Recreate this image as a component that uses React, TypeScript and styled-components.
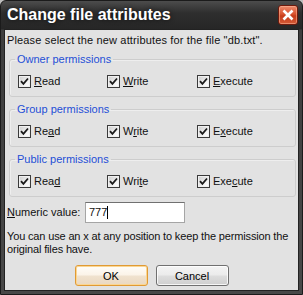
import React from 'react';
import styled, { createGlobalStyle } from 'styled-components';

const GlobalStyle = createGlobalStyle`
    html, body {
        margin: 0;
        padding: 0;
        background: #bdbdbd;
    }
    body {
        font-family: "Liberation Sans", Arial, sans-serif;
        font-size: 11px;
        color: #111;
    }
`;

const Window = styled.div`
    width: 303px;
    height: 295px;
    box-sizing: border-box;
    border: 1px solid #1b1b1b;
    border-radius: 6px 6px 0 0;
    background: linear-gradient(#4c4c4c 0px, #2e2e2e 12px, #262626 28px, #3e3e3e 29px, #484848 100%);
    display: flex;
    flex-direction: column;
    overflow: hidden;
`;

const TitleBar = styled.div`
    height: 28px;
    flex: none;
    display: flex;
    align-items: center;
    justify-content: space-between;
    padding: 0 4px 0 6px;
`;

const Title = styled.div`
    font-size: 16px;
    line-height: 20px;
    font-weight: bold;
    color: #fff;
    text-shadow: 0 0 5px rgba(0, 0, 0, 0.7);
`;

const CloseButton = styled.div`
    width: 20px;
    height: 20px;
    box-sizing: border-box;
    border: 1px solid #6e1a0c;
    border-radius: 3px;
    background: linear-gradient(#ec8a6c, #d9532f 45%, #c63d1b 55%, #d45a36);
    box-shadow: inset 0 0 0 1px rgba(255, 190, 160, 0.5);
    display: flex;
    align-items: center;
    justify-content: center;
`;

const ClientWrap = styled.div`
    flex: 1;
    padding: 0 3px 3px 3px;
    display: flex;
`;

const Client = styled.div`
    flex: 1;
    border: 1px solid #222;
    background: #e2e2e2;
    padding: 4px 2px 0 2px;
    display: flex;
    flex-direction: column;
`;

const Text = styled.div`
    line-height: 13px;
`;

const Intro = styled(Text)`
    letter-spacing: 0.15px;
`;

const Group = styled.fieldset`
    margin: 6px 0 0 2px;
    padding: 9px 8px 8px 8px;
    border: 1px solid #cdcdcd;
    border-radius: 3px;
    box-shadow: inset 1px 1px 0 #eeeeee;
    min-width: 0;
`;

const Legend = styled.legend`
    margin-left: -3px;
    padding: 0 2px;
    line-height: 13px;
    color: #1f4fd6;
`;

const Row = styled.div`
    display: grid;
    grid-template-columns: 89px 90px 1fr;
    height: 13px;
`;

const Option = styled.label`
    display: flex;
    align-items: center;
    gap: 3px;
    line-height: 13px;
`;

const Box = styled.span`
    width: 13px;
    height: 13px;
    box-sizing: border-box;
    border: 1px solid #3a3a3a;
    background: linear-gradient(135deg, #cbcbcb, #f6f6f6 70%, #ffffff);
    box-shadow: inset 0 0 0 1px #f0f0f0;
    display: flex;
    align-items: center;
    justify-content: center;
    flex: none;
`;

const NumericRow = styled.div`
    display: flex;
    align-items: center;
    margin-top: 5px;
`;

const NumericLabel = styled.span`
    width: 78px;
    line-height: 13px;
`;

const Field = styled.div`
    width: 100px;
    height: 21px;
    box-sizing: border-box;
    border: 1px solid #a5a5a5;
    border-top-color: #707070;
    background: #fff;
    padding: 0 3px;
    display: flex;
    align-items: center;
    line-height: 13px;
`;

const Caret = styled.span`
    width: 1px;
    height: 13px;
    background: #000;
`;

const Help = styled(Text)`
    margin-top: 7px;
    letter-spacing: -0.15px;
`;

const Buttons = styled.div`
    display: flex;
    justify-content: center;
    gap: 8px;
    margin-top: 9px;
`;

const Button = styled.button<{ $default?: boolean }>`
    width: 73px;
    height: 21px;
    padding: 0;
    font-family: inherit;
    font-size: 11px;
    color: #000;
    border-radius: 3px;
    border: 1px solid ${p => (p.$default ? '#e09a34' : '#707070')};
    background: ${p => (p.$default
        ? 'linear-gradient(#fffdf9, #fbf3e8 48%, #f0e2cf 52%, #ead8c0)'
        : 'linear-gradient(#f4f4f4, #ebebeb 48%, #dddddd 52%, #cfcfcf)')};
    box-shadow: inset 0 0 0 1px ${p => (p.$default ? '#fbd692' : 'rgba(255, 255, 255, 0.8)')};
`;

const groups = [
    { title: 'Owner permissions', keys: [0, 0, 0] },
    { title: 'Group permissions', keys: [2, 1, 1] },
    { title: 'Public permissions', keys: [3, 3, 3] },
];

const labels = ['Read', 'Write', 'Execute'];

const withKey = (text: string, i: number) => (
    <>
        {text.slice(0, i)}<u>{text[i]}</u>{text.slice(i + 1)}
    </>
);

const Check = () => (
    <Box>
        <svg width="9" height="9" viewBox="0 0 9 9">
            <path d="M1 4.2 L3.4 6.8 L8 1.5" fill="none" stroke="#1a1a1a" strokeWidth="1.8" />
        </svg>
    </Box>
);

export default function App() {
    return (
        <>
            <GlobalStyle />
            <Window>
                <TitleBar>
                    <Title>Change file attributes</Title>
                    <CloseButton>
                        <svg width="12" height="12" viewBox="0 0 12 12">
                            <path d="M1.5 1.5 L10.5 10.5 M10.5 1.5 L1.5 10.5" stroke="#fff" strokeWidth="2.6" />
                        </svg>
                    </CloseButton>
                </TitleBar>
                <ClientWrap>
                    <Client>
                        <Intro>Please select the new attributes for the file "db.txt".</Intro>
                        {groups.map(g => (
                            <Group key={g.title}>
                                <Legend>{g.title}</Legend>
                                <Row>
                                    {labels.map((l, i) => (
                                        <Option key={l}>
                                            <Check />
                                            <span>{withKey(l, g.keys[i])}</span>
                                        </Option>
                                    ))}
                                </Row>
                            </Group>
                        ))}
                        <NumericRow>
                            <NumericLabel>{withKey('Numeric value:', 0)}</NumericLabel>
                            <Field>777<Caret /></Field>
                        </NumericRow>
                        <Help>
                            You can use an x at any position to keep the permission the original files have.
                        </Help>
                        <Buttons>
                            <Button $default>OK</Button>
                            <Button>Cancel</Button>
                        </Buttons>
                    </Client>
                </ClientWrap>
            </Window>
        </>
    );
}
